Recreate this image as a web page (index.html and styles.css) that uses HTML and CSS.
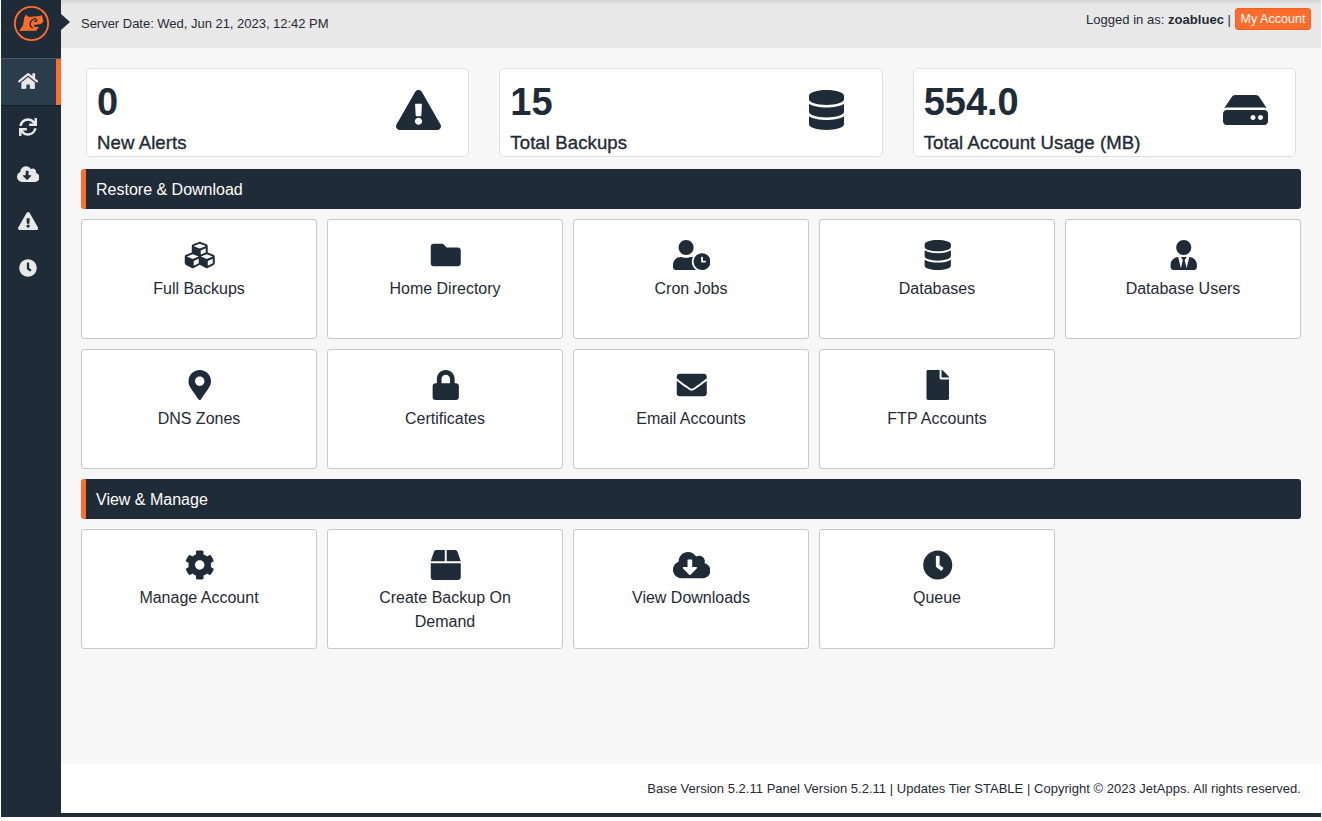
FILE: index.html
```html
<!DOCTYPE html>
<html lang="en">
<head>
<meta charset="utf-8">
<title>JetBackup</title>
<link rel="stylesheet" href="styles.css">
</head>
<body>
<svg class="sprite" aria-hidden="true">
  <symbol id="home" viewBox="0 0 576 512"><path d="M280.37 148.26L96 300.11V464a16 16 0 0 0 16 16l112.06-.29a16 16 0 0 0 15.92-16V368a16 16 0 0 1 16-16h64a16 16 0 0 1 16 16v95.64a16 16 0 0 0 16 16.05L464 480a16 16 0 0 0 16-16V300L295.67 148.26a12.19 12.19 0 0 0-15.3 0zM571.6 251.47L488 182.56V44.05a12 12 0 0 0-12-12h-56a12 12 0 0 0-12 12v72.61L318.47 43a48 48 0 0 0-61 0L4.34 251.47a12 12 0 0 0-1.6 16.9l25.5 31A12 12 0 0 0 45.15 301l235.22-193.74a12.19 12.19 0 0 1 15.3 0L530.9 301a12 12 0 0 0 16.9-1.6l25.5-31a12 12 0 0 0-1.7-16.93z"/></symbol>
  <symbol id="sync" viewBox="0 0 512 512"><path d="M440.65 12.57l4 82.77A247.16 247.16 0 0 0 255.83 8C134.73 8 33.91 94.92 12.29 209.82A12 12 0 0 0 24.09 224h49.05a12 12 0 0 0 11.67-9.26 175.91 175.91 0 0 1 317-56.94l-101.46-4.86a12 12 0 0 0-12.57 12v47.41a12 12 0 0 0 12 12H500a12 12 0 0 0 12-12V12a12 12 0 0 0-12-12h-47.37a12 12 0 0 0-11.98 12.57zM255.83 432a175.61 175.61 0 0 1-146-77.8l101.8 4.87a12 12 0 0 0 12.57-12v-47.4a12 12 0 0 0-12-12H12a12 12 0 0 0-12 12V500a12 12 0 0 0 12 12h47.35a12 12 0 0 0 12-12.6l-4.15-82.57A247.17 247.17 0 0 0 255.83 504c121.11 0 221.93-86.92 243.55-201.82a12 12 0 0 0-11.8-14.18h-49.05a12 12 0 0 0-11.67 9.26A175.86 175.86 0 0 1 255.83 432z"/></symbol>
  <symbol id="cloud" viewBox="0 0 640 512"><path d="M537.6 226.6c4.1-10.7 6.4-22.4 6.4-34.6 0-53-43-96-96-96-19.7 0-38.1 6-53.3 16.2C367 64.2 315.3 32 256 32c-88.4 0-160 71.6-160 160 0 2.7.1 5.4.2 8.1C40.2 219.8 0 273.2 0 336c0 79.5 64.5 144 144 144h368c70.7 0 128-57.3 128-128 0-61.9-44-113.6-102.4-125.4zm-132.9 88.7L299.3 420.7c-6.2 6.2-16.4 6.2-22.6 0L171.3 315.3c-10.1-10.1-2.9-27.3 11.3-27.3H248V176c0-8.8 7.2-16 16-16h48c8.8 0 16 7.2 16 16v112h65.4c14.2 0 21.4 17.2 11.3 27.3z"/></symbol>
  <symbol id="alert" viewBox="0 0 576 512"><path d="M569.517 440.013C587.975 472.007 564.806 512 527.94 512H48.054c-36.937 0-59.999-40.055-41.577-71.987L246.423 23.985c18.467-32.009 64.72-31.951 83.154 0l239.94 416.028zM288 354c-25.405 0-46 20.595-46 46s20.595 46 46 46 46-20.595 46-46-20.595-46-46-46zm-43.673-165.346l7.418 136c.347 6.364 5.609 11.346 11.982 11.346h48.546c6.373 0 11.635-4.982 11.982-11.346l7.418-136c.375-6.874-5.098-12.654-11.982-12.654h-63.383c-6.884 0-12.356 5.78-11.981 12.654z"/></symbol>
  <symbol id="clock" viewBox="0 0 512 512"><path d="M256,8C119,8,8,119,8,256S119,504,256,504,504,393,504,256,393,8,256,8Zm92.49,313h0l-20,25a16,16,0,0,1-22.49,2.5h0l-67-49.72a40,40,0,0,1-15-31.23V112a16,16,0,0,1,16-16h32a16,16,0,0,1,16,16V256l58,42.5A16,16,0,0,1,348.49,321Z"/></symbol>
  <symbol id="database" viewBox="0 0 448 512"><path d="M448 73.143v45.714C448 159.143 347.667 192 224 192S0 159.143 0 118.857V73.143C0 32.857 100.333 0 224 0s224 32.857 224 73.143zM448 176v102.857C448 319.143 347.667 352 224 352S0 319.143 0 278.857V176c48.125 33.143 136.208 48.572 224 48.572S399.874 209.143 448 176zm0 160v102.857C448 479.143 347.667 512 224 512S0 479.143 0 438.857V336c48.125 33.143 136.208 48.572 224 48.572S399.874 369.143 448 336z"/></symbol>
  <symbol id="hdd" viewBox="0 0 576 512"><path d="M576 304v96c0 26.51-21.49 48-48 48H48c-26.51 0-48-21.49-48-48v-96c0-26.51 21.49-48 48-48h480c26.51 0 48 21.49 48 48zm-48-80a79.557 79.557 0 0 1 30.777 6.165L462.25 85.374A48.003 48.003 0 0 0 422.311 64H153.689a48 48 0 0 0-39.938 21.374L17.223 230.165A79.557 79.557 0 0 1 48 224h480zm-48 96c-17.673 0-32 14.327-32 32s14.327 32 32 32 32-14.327 32-32-14.327-32-32-32zm-96 0c-17.673 0-32 14.327-32 32s14.327 32 32 32 32-14.327 32-32-14.327-32-32-32z"/></symbol>
  <symbol id="cubes" viewBox="0 0 512 512"><path d="M488.6 250.2L392 214V105.5c0-15-9.3-28.4-23.4-33.7l-100-37.5c-8.1-3.1-17.1-3.1-25.3 0l-100 37.5c-14.1 5.3-23.4 18.7-23.4 33.7V214l-96.6 36.2C9.3 255.5 0 268.9 0 283.9V394c0 13.6 7.7 26.1 19.9 32.2l100 50c10.1 5.1 22.1 5.1 32.2 0l103.9-52 103.9 52c10.1 5.1 22.1 5.1 32.2 0l100-50c12.2-6.1 19.9-18.6 19.9-32.2V283.9c0-15-9.3-28.4-23.4-33.7zM358 214.8l-85 31.9v-68.2l85-37v73.3zM154 104.1l102-38.2 102 38.2v.6l-102 41.4-102-41.4v-.6zm84 291.1l-85 42.5v-79.1l85-38.8v75.4zm0-112l-102 41.4-102-41.4v-.6l102-38.2 102 38.2v.6zm240 112l-85 42.5v-79.1l85-38.8v75.4zm0-112l-102 41.4-102-41.4v-.6l102-38.2 102 38.2v.6z"/></symbol>
  <symbol id="folder" viewBox="0 0 512 512"><path d="M464 128H272l-64-64H48C21.49 64 0 85.49 0 112v288c0 26.51 21.49 48 48 48h416c26.51 0 48-21.49 48-48V176c0-26.51-21.49-48-48-48z"/></symbol>
  <symbol id="user-clock" viewBox="0 0 640 512"><path d="M496 224c-79.6 0-144 64.4-144 144s64.4 144 144 144 144-64.4 144-144-64.4-144-144-144zm64 150.3c0 5.3-4.4 9.7-9.7 9.7h-60.6c-5.3 0-9.7-4.4-9.7-9.7v-76.6c0-5.3 4.4-9.7 9.7-9.7h12.6c5.3 0 9.7 4.4 9.7 9.7V352h38.3c5.3 0 9.7 4.4 9.7 9.7v12.6zM320 368c0-27.8 6.7-54.1 18.2-77.5-8-1.5-16.2-2.5-24.6-2.5h-16.7c-22.2 10.2-46.9 16-72.9 16s-50.6-5.8-72.9-16h-16.7C60.2 288 0 348.2 0 422.4V464c0 26.5 21.5 48 48 48h347.1c-45.3-31.9-75.1-84.5-75.1-144zm-96-112c70.7 0 128-57.3 128-128S294.7 0 224 0 96 57.3 96 128s57.3 128 128 128z"/></symbol>
  <symbol id="user-tie" viewBox="0 0 448 512"><path d="M224 256c70.7 0 128-57.3 128-128S294.7 0 224 0 96 57.3 96 128s57.3 128 128 128zm95.8 32.6L272 480l-32-136 32-56h-96l32 56-32 136-47.8-191.4C56.9 292 0 350.3 0 422.4V464c0 26.5 21.5 48 48 48h352c26.5 0 48-21.5 48-48v-41.6c0-72.1-56.9-130.4-128.2-133.8z"/></symbol>
  <symbol id="marker" viewBox="0 0 384 512"><path d="M172.268 501.67C26.97 291.031 0 269.413 0 192 0 85.961 85.961 0 192 0s192 85.961 192 192c0 77.413-26.97 99.031-172.268 309.67-9.535 13.774-29.93 13.773-39.464 0zM192 272c44.183 0 80-35.817 80-80s-35.817-80-80-80-80 35.817-80 80 35.817 80 80 80z"/></symbol>
  <symbol id="lock" viewBox="0 0 448 512"><path d="M400 224h-24v-72C376 68.2 307.8 0 224 0S72 68.2 72 152v72H48c-26.5 0-48 21.5-48 48v192c0 26.5 21.5 48 48 48h352c26.5 0 48-21.5 48-48V272c0-26.5-21.5-48-48-48zm-104 0H152v-72c0-39.7 32.3-72 72-72s72 32.3 72 72v72z"/></symbol>
  <symbol id="envelope" viewBox="0 0 512 512"><path d="M502.3 190.8c3.9-3.1 9.7-.2 9.7 4.7V400c0 26.5-21.5 48-48 48H48c-26.5 0-48-21.5-48-48V195.6c0-5 5.7-7.8 9.7-4.7 22.4 17.4 52.1 39.5 154.1 113.6 21.1 15.4 56.7 47.8 92.2 47.6 35.7.3 72-32.8 92.3-47.6 102-74.1 131.6-96.3 154-113.7zM256 320c23.2.4 56.6-29.2 73.4-41.4 132.7-96.3 142.8-104.7 173.4-128.7 5.8-4.5 9.2-11.5 9.2-18.9v-19c0-26.5-21.5-48-48-48H48c-26.5 0-48 21.5-48 48v19c0 7.4 3.4 14.3 9.2 18.9 30.6 23.9 40.7 32.4 173.4 128.7 16.8 12.2 50.2 41.8 73.4 41.4z"/></symbol>
  <symbol id="file" viewBox="0 0 384 512"><path d="M224 136V0H24C10.7 0 0 10.7 0 24v464c0 13.3 10.7 24 24 24h336c13.3 0 24-10.7 24-24V160H248c-13.2 0-24-10.8-24-24zm160-14.1v6.1H256V0h6.1c6.4 0 12.5 2.5 17 7l97.9 98c4.5 4.5 7 10.6 7 16.9z"/></symbol>
  <symbol id="cog" viewBox="0 0 512 512"><path d="M487.4 315.7l-42.6-24.6c4.3-23.2 4.3-47 0-70.2l42.6-24.6c4.9-2.8 7.1-8.6 5.5-14-11.1-35.6-30-67.8-54.7-94.6-3.8-4.1-10-5.1-14.8-2.3L380.8 110c-17.9-15.4-38.5-27.3-60.8-35.1V25.8c0-5.6-3.9-10.5-9.4-11.7-36.7-8.2-74.3-7.8-109.2 0-5.5 1.2-9.4 6.1-9.4 11.7V75c-22.2 7.9-42.8 19.8-60.8 35.1L88.7 85.5c-4.9-2.8-11-1.9-14.8 2.3-24.7 26.7-43.6 58.9-54.7 94.6-1.7 5.4.6 11.2 5.5 14L67.3 221c-4.3 23.2-4.3 47 0 70.2l-42.6 24.6c-4.9 2.8-7.1 8.6-5.5 14 11.1 35.6 30 67.8 54.7 94.6 3.8 4.1 10 5.1 14.8 2.3l42.6-24.6c17.9 15.4 38.5 27.3 60.8 35.1v49.2c0 5.6 3.9 10.5 9.4 11.7 36.7 8.2 74.3 7.8 109.2 0 5.5-1.2 9.4-6.1 9.4-11.7v-49.2c22.2-7.9 42.8-19.8 60.8-35.1l42.6 24.6c4.9 2.8 11 1.9 14.8-2.3 24.7-26.7 43.6-58.9 54.7-94.6 1.5-5.5-.7-11.3-5.6-14.1zM256 336c-44.1 0-80-35.9-80-80s35.9-80 80-80 80 35.9 80 80-35.9 80-80 80z"/></symbol>
  <symbol id="box" viewBox="0 0 512 512"><path d="M509.5 184.6L458.9 32.8C452.4 13.2 434.1 0 413.4 0H272v192h238.7c-.4-2.5-.4-5-1.2-7.4zM240 0H98.6c-20.7 0-39 13.2-45.5 32.8L2.5 184.6c-.8 2.4-.8 4.9-1.2 7.4H240V0zM0 224v240c0 26.5 21.5 48 48 48h416c26.5 0 48-21.5 48-48V224H0z"/></symbol>
</svg>

<div class="app">
  <nav class="sidebar">
    <a class="logo">
      <svg viewBox="0 0 36 36">
        <circle cx="18" cy="18" r="16.2" fill="none" stroke="#ff6c2c" stroke-width="1.8"/>
        <path fill="#ff6c2c" d="M12.6 9.4 15.6 11.6 20 11.2 26.6 10.6 28.2 9.8 29.6 16.4 27 18.6 20.4 19.4 20.6 21.2 25.4 21.4 22.4 25.1 6.2 25.3 8.2 21.8 9.8 19.6 11 11.8Z"/>
        <path fill="none" stroke="#1f2b36" stroke-width="1.3" d="M22.6 13.2Q17.4 13.6 16.6 18.2 16.4 21 19.2 22.2"/>
        <path fill="#1f2b36" d="M19.4 16.4 24 13.6 23.4 16.2Z"/>
      </svg>
    </a>
    <a class="nav-item active"><svg class="icon"><use href="#home"/></svg></a>
    <a class="nav-item"><svg class="icon square"><use href="#sync"/></svg></a>
    <a class="nav-item"><svg class="icon wide"><use href="#cloud"/></svg></a>
    <a class="nav-item"><svg class="icon"><use href="#alert"/></svg></a>
    <a class="nav-item"><svg class="icon square"><use href="#clock"/></svg></a>
  </nav>

  <div class="page">
    <header class="topbar">
      <span class="date">Server Date: Wed, Jun 21, 2023, 12:42 PM</span>
      <div class="session"><span>Logged in as: <b>zoabluec</b> |</span><a class="account">My Account</a></div>
    </header>

    <main class="content">
      <section class="stats">
        <div class="stat"><div><div class="number">0</div><div class="caption">New Alerts</div></div><svg><use href="#alert"/></svg></div>
        <div class="stat"><div><div class="number">15</div><div class="caption">Total Backups</div></div><svg class="narrow"><use href="#database"/></svg></div>
        <div class="stat"><div><div class="number">554.0</div><div class="caption">Total Account Usage (MB)</div></div><svg><use href="#hdd"/></svg></div>
      </section>

      <h2 class="heading">Restore &amp; Download</h2>
      <section class="tiles">
        <a class="tile"><svg><use href="#cubes"/></svg><span>Full Backups</span></a>
        <a class="tile"><svg><use href="#folder"/></svg><span>Home Directory</span></a>
        <a class="tile"><svg><use href="#user-clock"/></svg><span>Cron Jobs</span></a>
        <a class="tile"><svg><use href="#database"/></svg><span>Databases</span></a>
        <a class="tile"><svg><use href="#user-tie"/></svg><span>Database Users</span></a>
        <a class="tile"><svg><use href="#marker"/></svg><span>DNS Zones</span></a>
        <a class="tile"><svg><use href="#lock"/></svg><span>Certificates</span></a>
        <a class="tile"><svg><use href="#envelope"/></svg><span>Email Accounts</span></a>
        <a class="tile"><svg><use href="#file"/></svg><span>FTP Accounts</span></a>
      </section>

      <h2 class="heading">View &amp; Manage</h2>
      <section class="tiles manage">
        <a class="tile"><svg><use href="#cog"/></svg><span>Manage Account</span></a>
        <a class="tile"><svg><use href="#box"/></svg><span>Create Backup On Demand</span></a>
        <a class="tile"><svg><use href="#cloud"/></svg><span>View Downloads</span></a>
        <a class="tile"><svg><use href="#clock"/></svg><span>Queue</span></a>
      </section>
    </main>

    <footer class="footer">Base Version 5.2.11 Panel Version 5.2.11 | Updates Tier STABLE | Copyright © 2023 JetApps. All rights reserved.</footer>
  </div>
</div>
</body>
</html>
```
FILE: styles.css
```css
* { box-sizing: border-box; }

body {
  margin: 0;
  padding: 0 1px 4px;
  height: 821px;
  overflow: hidden;
  background: #fcfcfc;
  color: #1f2b36;
  font-family: "Liberation Sans", Arial, sans-serif;
  font-size: 16px;
}

.sprite { display: none; }
svg { display: block; fill: currentColor; }

.app {
  display: flex;
  height: 817px;
  padding-bottom: 4px;
  background: #1f2b36;
}

.sidebar { width: 60px; flex: none; }

.logo { display: block; height: 58px; padding: 5px 0 0 12px; }
.logo svg { width: 37px; height: 37px; }

.nav-item {
  display: flex;
  align-items: center;
  justify-content: center;
  height: 47px;
  padding-right: 6.5px;
  color: #e8e8e8;
}
.nav-item.active {
  margin-bottom: -2px;
  padding-bottom: 3px;
  background: #2b3c4a;
  border-top: 1px solid #4a5a67;
  box-shadow: inset -5px 0 #ff6c2c, 0 1px #17212a;
}
.icon { width: 20.25px; height: 18px; }
.icon.square { width: 18px; }
.icon.wide { width: 22.5px; }

.page {
  flex: 1;
  display: flex;
  flex-direction: column;
  background: #f7f7f7;
}

.topbar {
  position: relative;
  display: flex;
  justify-content: space-between;
  height: 48px;
  padding: 0 10px 0 20px;
  background: linear-gradient(#d4d4d4, #e8e8e8 5px);
  font-size: 13px;
}
.topbar::before {
  content: "";
  position: absolute;
  left: 0;
  top: 14px;
  border: solid transparent;
  border-width: 8.5px 0 8.5px 9px;
  border-left-color: #1f2b36;
}
.date { line-height: 47px; letter-spacing: -.02px; }
.session { display: flex; gap: 4px; line-height: 39px; letter-spacing: .03px; }
.account {
  width: 76px;
  height: 22px;
  margin-top: 8px;
  border: 1px solid #ee6122;
  border-radius: 3px;
  background: #ff6c2c;
  color: #fff;
  font-size: 12.5px;
  line-height: 20px;
  text-align: center;
}

.content { flex: 1; padding: 20px 20px 0; }

.stats {
  display: grid;
  grid-template-columns: repeat(3, 1fr);
  gap: 30px;
  padding: 0 5px;
}
.stat {
  display: flex;
  justify-content: space-between;
  height: 89px;
  padding: 0 0 0 10px;
  border: 1px solid #e0e0e0;
  border-radius: 5px;
  background: #fff;
}
.stat svg { width: 45px; height: 40px; margin: 21px 27.5px 0 0; }
.stat svg.narrow { width: 35px; margin-right: 38px; }
.number { padding-top: 11px; font-size: 38px; font-weight: bold; line-height: 45px; }
.caption {
  font-size: 18.6px;
  line-height: 22px;
  margin-top: 7px;
  letter-spacing: .08px;
  -webkit-text-stroke: .35px currentColor;
}

.heading {
  height: 40px;
  margin: 12px 0 10px;
  padding-left: 10px;
  border-left: 5px solid #ff6c2c;
  border-radius: 3px;
  background: #1f2b36;
  color: #fff;
  font-size: 16px;
  font-weight: normal;
  line-height: 42px;
}
.tiles + .heading { margin-top: 10px; }

.tiles {
  display: grid;
  grid-template-columns: repeat(5, 1fr);
  grid-auto-rows: 120px;
  gap: 10px;
}
.tile {
  display: flex;
  flex-direction: column;
  align-items: center;
  gap: 7px;
  padding: 20px 45px 0;
  border: 1px solid #c8c8c8;
  border-radius: 3px;
  background: #fff;
  line-height: 24px;
  text-align: center;
}
.tile svg { width: 37.5px; height: 30px; margin-left: 1px; flex: none; }
.manage .tile { gap: 6px; }

.footer {
  height: 49px;
  padding-right: 20px;
  background: #fff;
  font-size: 13px;
  line-height: 49px;
  letter-spacing: .02px;
  text-align: right;
}
```
